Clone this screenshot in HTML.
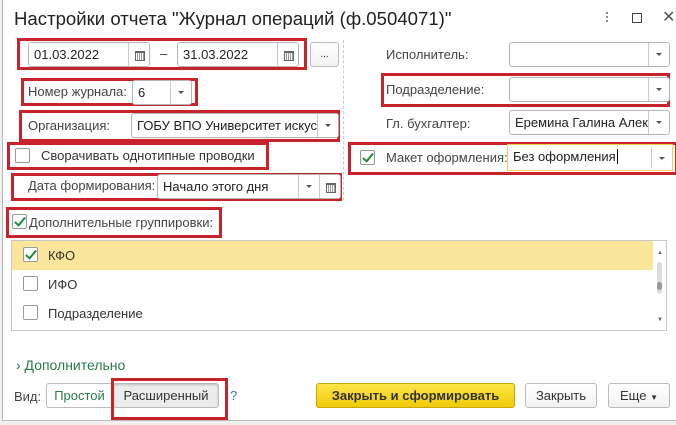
<!DOCTYPE html>
<html><head><meta charset="utf-8"><style>
*{box-sizing:border-box;margin:0;padding:0}
body{width:676px;height:425px;background:#f0f0f0;font-family:"Liberation Sans","Noto Sans CJK SC",sans-serif;font-size:12.5px;color:#333;position:relative;overflow:hidden}
.win{position:absolute;left:2px;top:-2px;width:680px;height:423px;background:#fff;border:1px solid #b8b8b8}
.a{position:absolute}
.red{position:absolute;border:3px solid #c8232c}
.inp{position:absolute;border:1px solid #b5b5b5;border-radius:3px;background:#fff;height:25px;line-height:23px;padding-left:5px;color:#222;font-size:13px;white-space:nowrap;overflow:hidden}
.sep{position:absolute;top:0;bottom:0;width:21px;right:0;border-left:1px solid #ccc;background:#fff}
.sep.arr::after{content:"";position:absolute;left:7px;top:10px;border-left:3px solid transparent;border-right:3px solid transparent;border-top:3px solid #555}
.cal::after{content:"";position:absolute;left:6px;top:8px;width:8px;height:7px;border:1px solid #666;border-top-width:2px;background:repeating-linear-gradient(90deg,#fff 0 1px,#999 1px 2px)}
.lbl{position:absolute;color:#444;font-size:13px}
.cb{position:absolute;width:15px;height:15px;border:1px solid #999;border-radius:2px;background:#fff}
.ck::after{content:"";position:absolute;left:4px;top:0px;width:4px;height:9px;border:solid #1e8a3c;border-width:0 2.5px 2.5px 0;transform:rotate(40deg)}
.btn{position:absolute;border:1px solid #bbb;border-radius:3px;background:linear-gradient(#fff,#f1f1f1);text-align:center;line-height:23px;height:25px;font-size:13px;color:#333}
</style></head><body>
<div class="win"></div>
<div class="a" style="left:14px;top:8px;font-size:18.6px;color:#222">Настройки отчета "Журнал операций (ф.0504071)"</div>
<div class="a" style="left:606px;top:12px;width:2px;height:12px;background:repeating-linear-gradient(#888 0 2px,transparent 2px 4px)"></div>
<div class="a" style="left:632px;top:13px;width:10px;height:10px;border:1.5px solid #444"></div>
<div class="a" style="left:662px;top:7px;font-size:16px;color:#555">✕</div>

<div class="a" style="left:343px;top:40px;height:160px;border-left:1px dashed #ccc"></div>

<div class="red" style="left:17px;top:38px;width:290px;height:32px"></div>
<div class="inp" style="left:28px;top:42px;width:122px">01.03.2022<div class="sep cal"></div></div>
<div class="a" style="left:160px;top:46px;font-size:13px">–</div>
<div class="inp" style="left:177px;top:42px;width:122px">31.03.2022<div class="sep cal"></div></div>
<div class="btn" style="left:310px;top:42px;width:29px;font-size:10px">...</div>

<div class="red" style="left:21px;top:78px;width:177px;height:28px"></div>
<div class="lbl" style="left:28px;top:84px">Номер журнала:</div>
<div class="inp" style="left:132px;top:80px;width:60px">6<div class="sep arr"></div></div>

<div class="red" style="left:19px;top:110px;width:321px;height:32px"></div>
<div class="lbl" style="left:28px;top:118px">Организация:</div>
<div class="inp" style="left:131px;top:113px;width:208px">ГОБУ ВПО Университет искус<div class="sep arr"></div></div>

<div class="red" style="left:7px;top:142px;width:262px;height:28px"></div>
<div class="cb" style="left:15px;top:148px"></div>
<div class="lbl" style="left:41px;top:148px;color:#333">Сворачивать однотипные проводки</div>

<div class="red" style="left:11px;top:173px;width:331px;height:28px"></div>
<div class="lbl" style="left:28px;top:178px">Дата формирования:</div>
<div class="inp" style="left:157px;top:174px;width:184px">Начало этого дня<div class="sep cal"></div><div class="sep arr" style="right:21px"></div></div>

<div class="red" style="left:6px;top:207px;width:216px;height:31px"></div>
<div class="cb ck" style="left:12px;top:214px"></div>
<div class="lbl" style="left:29px;top:215px">Дополнительные группировки:</div>

<div class="lbl" style="left:386px;top:47px">Исполнитель:</div>
<div class="inp" style="left:509px;top:42px;width:161px"><div class="sep arr"></div></div>
<div class="red" style="left:381px;top:73px;width:289px;height:34px"></div>
<div class="lbl" style="left:386px;top:82px">Подразделение:</div>
<div class="inp" style="left:509px;top:77px;width:161px"><div class="sep arr"></div></div>
<div class="lbl" style="left:386px;top:116px">Гл. бухгалтер:</div>
<div class="inp" style="left:509px;top:110px;width:161px">Еремина Галина Алексе<div class="sep arr"></div></div>
<div class="red" style="left:348px;top:142px;width:330px;height:33px"></div>
<div class="cb ck" style="left:360px;top:150px"></div>
<div class="lbl" style="left:386px;top:150px">Макет оформления:</div>
<div class="inp" style="left:507px;top:144px;width:166px;height:27px;border:1.5px solid #f2d24b;border-radius:0;line-height:24px">Без оформления<span style="border-left:1px solid #000;margin-left:1px"></span><div class="sep arr" style="top:2px;bottom:2px"></div></div>

<div class="a" style="left:11px;top:240px;width:656px;height:91px;border:1px solid #c8c8c8"></div>
<div class="a" style="left:12px;top:241px;width:641px;height:29px;background:#fbe59a"></div>
<div class="cb ck" style="left:23px;top:247px"></div>
<div class="lbl" style="left:48px;top:248px;color:#333">КФО</div>
<div class="cb" style="left:23px;top:276px"></div>
<div class="lbl" style="left:48px;top:277px;color:#333">ИФО</div>
<div class="cb" style="left:23px;top:305px"></div>
<div class="lbl" style="left:48px;top:306px;color:#333">Подразделение</div>
<div class="a" style="left:657px;top:262px;width:5px;height:32px;background:#ddd;border-radius:3px"></div>
<div class="a" style="left:657px;top:282px;width:5px;height:8px;background:#999;border-radius:3px"></div>
<div class="a" style="left:657px;top:250px;font-size:6px;color:#666">▲</div>
<div class="a" style="left:657px;top:317px;font-size:6px;color:#666">▼</div>

<div class="a" style="left:16px;top:357px;color:#2a7a4a;font-size:14px">›&nbsp;Дополнительно</div>
<div class="lbl" style="left:14px;top:389px">Вид:</div>
<div class="btn" style="left:46px;top:383px;width:67px;background:#fff;color:#2a7a4a">Простой</div>
<div class="btn" style="left:113px;top:383px;width:106px;background:#ececec;box-shadow:inset 0 1px 2px #bbb">Расширенный</div>
<div class="red" style="left:111px;top:378px;width:117px;height:42px"></div>
<div class="a" style="left:230px;top:388px;color:#3a7ac0;font-size:13px">?</div>
<div class="btn" style="left:316px;top:383px;width:199px;background:linear-gradient(#fde54a,#f0cb08);border-color:#c9a600;font-weight:bold;color:#333">Закрыть и сформировать</div>
<div class="btn" style="left:525px;top:383px;width:72px">Закрыть</div>
<div class="btn" style="left:608px;top:383px;width:62px">Еще <span style="font-size:8px">▼</span></div>
</body></html>
